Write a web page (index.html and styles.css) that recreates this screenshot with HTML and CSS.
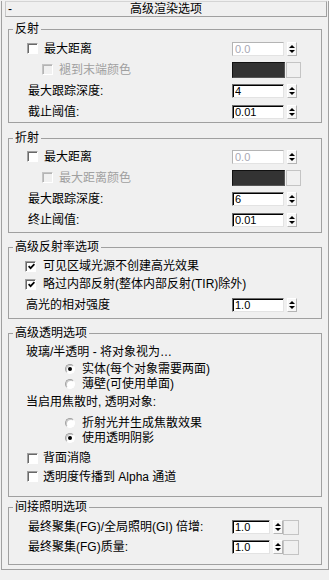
FILE: index.html
```html
<!DOCTYPE html>
<html lang="zh-CN">
  <head>
    <meta charset="UTF-8" />
    <title>高级渲染选项</title>
    <link rel="stylesheet" href="styles.css">
  </head>
  <body>
    <div class="rollout">
      <div class="rollout-title">
        <span class="toggle">-</span>
        <span class="title-text">高级渲染选项</span>
      </div>

      <fieldset class="group group-reflect">
        <legend>反射</legend>
        <div class="row check-row">
          <label class="check"><span class="box"></span>最大距离</label>
          <div class="ctrl"><input class="num" type="text" value="0.0" disabled><span class="spin"></span></div>
        </div>
        <div class="row sub-row">
          <label class="check disabled"><span class="box"></span>褪到末端颜色</label>
          <div class="ctrl"><span class="swatch"></span><span class="swatch-btn"></span></div>
        </div>
        <div class="row">
          <span class="label">最大跟踪深度:</span>
          <div class="ctrl"><input class="num" type="text" value="4"><span class="spin"></span></div>
        </div>
        <div class="row">
          <span class="label">截止阈值:</span>
          <div class="ctrl"><input class="num" type="text" value="0.01"><span class="spin"></span></div>
        </div>
      </fieldset>

      <fieldset class="group group-refract">
        <legend>折射</legend>
        <div class="row check-row">
          <label class="check"><span class="box"></span>最大距离</label>
          <div class="ctrl"><input class="num" type="text" value="0.0" disabled><span class="spin"></span></div>
        </div>
        <div class="row sub-row">
          <label class="check disabled"><span class="box"></span>最大距离颜色</label>
          <div class="ctrl"><span class="swatch"></span><span class="swatch-btn"></span></div>
        </div>
        <div class="row">
          <span class="label">最大跟踪深度:</span>
          <div class="ctrl"><input class="num" type="text" value="6"><span class="spin"></span></div>
        </div>
        <div class="row">
          <span class="label">终止阈值:</span>
          <div class="ctrl"><input class="num" type="text" value="0.01"><span class="spin"></span></div>
        </div>
      </fieldset>

      <fieldset class="group group-spec">
        <legend>高级反射率选项</legend>
        <div class="row row-sm check-row tight">
          <label class="check"><span class="box on"><svg viewBox="0 0 7 7" width="7" height="7"><path d="M0.6 3.2 L2.6 5.2 L6.4 1.2" stroke="#000" stroke-width="1.7" fill="none"/></svg></span>可见区域光源不创建高光效果</label>
        </div>
        <div class="row row-sm check-row tight">
          <label class="check"><span class="box on"><svg viewBox="0 0 7 7" width="7" height="7"><path d="M0.6 3.2 L2.6 5.2 L6.4 1.2" stroke="#000" stroke-width="1.7" fill="none"/></svg></span>略过内部反射(整体内部反射(TIR)除外)</label>
        </div>
        <div class="row row-lg text-row">
          <span class="label">高光的相对强度</span>
          <div class="ctrl"><input class="num" type="text" value="1.0"><span class="spin"></span></div>
        </div>
      </fieldset>

      <fieldset class="group group-trans">
        <legend>高级透明选项</legend>
        <div class="row row-sm text-row">
          <span class="label">玻璃/半透明 - 将对象视为…</span>
        </div>
        <div class="row row-radio radio-row">
          <label class="check"><span class="radio on"></span>实体(每个对象需要两面)</label>
        </div>
        <div class="row row-radio radio-row">
          <label class="check"><span class="radio"></span>薄壁(可使用单面)</label>
        </div>
        <div class="row row-lg text-row">
          <span class="label">当启用焦散时, 透明对象:</span>
        </div>
        <div class="row row-radio radio-row gap-top">
          <label class="check"><span class="radio"></span>折射光并生成焦散效果</label>
        </div>
        <div class="row row-radio radio-row">
          <label class="check"><span class="radio on"></span>使用透明阴影</label>
        </div>
        <div class="row row-sm check-row narrow gap-top-lg">
          <label class="check"><span class="box"></span>背面消隐</label>
        </div>
        <div class="row row-sm check-row narrow last">
          <label class="check"><span class="box"></span>透明度传播到 Alpha 通道</label>
        </div>
      </fieldset>

      <fieldset class="group group-indirect">
        <legend>间接照明选项</legend>
        <div class="row row-md">
          <span class="label">最终聚集(FG)/全局照明(GI) 倍增:</span>
          <div class="ctrl"><input class="num short" type="text" value="1.0"><span class="spin"></span><span class="blank-btn"></span></div>
        </div>
        <div class="row row-md">
          <span class="label">最终聚集(FG)质量:</span>
          <div class="ctrl"><input class="num short" type="text" value="1.0"><span class="spin"></span><span class="blank-btn"></span></div>
        </div>
      </fieldset>
    </div>
  </body>
</html>
```

FILE: styles.css
```css
:root {
  --bg: #f0f0f0;
  --line: #a0a0a0;
  --disabled: #a0a0a0;
}

* {
  box-sizing: border-box;
}

body {
  margin: 0;
  background: var(--bg);
  color: #000;
  font: 12px/14px "Liberation Sans", "Noto Sans CJK SC", sans-serif;
}

.rollout {
  width: 328px;
  height: 569px;
  margin: 10px 0 0 1px;
  border: 1px solid var(--line);
  border-top: none;
}

.rollout-title {
  display: grid;
  grid-template-columns: 20px 1fr 20px;
  align-items: center;
  height: 16px;
  margin: -9px 1px 0 3px;
  border: 1px solid var(--line);
  border-top-color: #d4d4d4;
  border-left-color: #c8c8c8;
  background: var(--bg);
}

.toggle {
  padding-left: 2px;
}

.title-text {
  text-align: center;
}

/* group boxes */
.group {
  margin: 0 6px;
  padding: 0;
  border: 1px solid var(--line);
  min-inline-size: 0;
}

.group legend {
  margin-left: 4px;
  padding: 0 2px;
  line-height: 14px;
}

.group-reflect {
  margin-top: 5px;
  padding-top: 2px;
}

.group-refract {
  margin-top: 8px;
  padding: 1px 0 2px;
}

.group-spec {
  margin-top: 7px;
  padding: 3px 0 2px;
}

.group-trans {
  margin-top: 7px;
  padding: 3px 0 10px;
}

.group-indirect {
  margin-top: 3px;
  padding: 3px 0 7px;
}

/* rows */
.row {
  display: flex;
  align-items: center;
  height: 21px;
  padding-left: 19px;
}

.row-sm {
  height: 18px;
}

.row-md {
  height: 20px;
}

.row-lg {
  height: 22px;
}

.row-radio {
  height: 15px;
}

.group-spec .row-lg {
  margin-top: 1px;
}

.check-row {
  padding-left: 18px;
}

.check-row.tight {
  padding-left: 16px;
}

.sub-row {
  padding-left: 33px;
}

.text-row {
  padding-left: 17px;
}

.radio-row {
  padding-left: 56px;
}

.gap-top {
  margin-top: 2px;
}

.gap-top-lg {
  margin-top: 4px;
}

.row.last {
  height: 19px;
}

.label,
.check {
  flex: 1;
  white-space: nowrap;
}

.check {
  display: flex;
  align-items: center;
}

.check.disabled {
  color: var(--disabled);
}

/* checkbox and radio */
.box {
  display: flex;
  align-items: center;
  justify-content: center;
  flex: none;
  width: 11px;
  height: 11px;
  margin-right: 6px;
  border: 1px solid;
  border-color: var(--line) #fff #fff var(--line);
  box-shadow: inset 1px 1px 0 #696969;
  background: #fff;
}

.check-row.tight .box {
  margin-right: 7px;
}

.check-row.narrow .box {
  margin-right: 5px;
}

.check.disabled .box {
  border-color: #c4c4c4 #fff #fff #c4c4c4;
  box-shadow: inset 1px 1px 0 #b4b4b4;
  background: var(--bg);
}

.box svg {
  display: block;
  margin: 1px 0 0 1px;
}

.radio {
  display: flex;
  align-items: center;
  justify-content: center;
  flex: none;
  width: 10px;
  height: 10px;
  margin-right: 7px;
  border: 1px solid;
  border-color: var(--line) #fff #fff var(--line);
  border-radius: 50%;
  box-shadow: inset 1px 1px 0 #c8c8c8;
  background: #fff;
}

.radio.on::after {
  content: "";
  width: 4px;
  height: 4px;
  border-radius: 50%;
  background: #000;
}

/* numeric fields */
.ctrl {
  display: flex;
  align-items: center;
  flex: none;
  width: 70px;
  margin-right: 19px;
}

.num {
  width: 52px;
  height: 14px;
  margin: 0 3px 0 0;
  padding: 0 0 0 2px;
  border: 1px solid;
  border-color: #6d6d6d #e3e3e3 #e3e3e3 #6d6d6d;
  box-shadow: inset 1px 1px 0 #000;
  background: #fff;
  color: #000;
  font: 11px "Liberation Sans", sans-serif;
  outline: none;
}

.num.short {
  width: 38px;
}

.num:disabled {
  border-color: #b4b4b4 #e3e3e3 #e3e3e3 #b4b4b4;
  box-shadow: none;
  color: #a8a8b4;
}

.spin {
  display: flex;
  flex-direction: column;
  align-items: center;
  justify-content: center;
  gap: 2px;
  flex: none;
  width: 10px;
  height: 14px;
  border: 1px solid;
  border-color: #fff #b4b4b4 #b4b4b4 #fff;
  background: #f7f7f7;
}

.spin::before,
.spin::after {
  content: "";
  border-left: 3px solid transparent;
  border-right: 3px solid transparent;
}

.spin::before {
  border-bottom: 3px solid #000;
}

.spin::after {
  border-top: 3px solid #000;
}

.swatch {
  flex: none;
  width: 53px;
  height: 16px;
  margin-right: 1px;
  border: 1px solid #111;
  border-right-color: #555;
  border-bottom-color: #555;
  background: #333;
}

.swatch-btn {
  flex: none;
  width: 15px;
  height: 16px;
  border: 1px solid #c4c4c4;
  background: var(--bg);
}

.blank-btn {
  flex: none;
  width: 16px;
  height: 15px;
  border: 1px solid #c4c4c4;
  background: var(--bg);
}
```
